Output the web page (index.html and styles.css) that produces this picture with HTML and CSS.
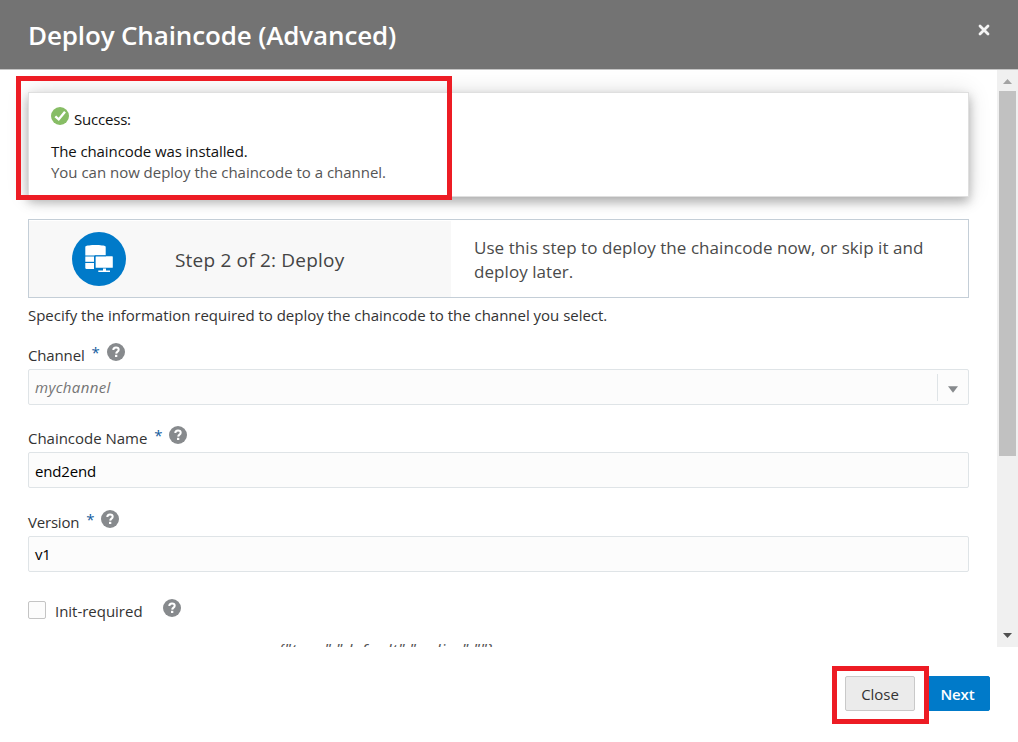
FILE: index.html
```html
<!DOCTYPE html>
<html lang="en">
<head>
<meta charset="utf-8">
<title>Deploy Chaincode (Advanced)</title>
<link rel="stylesheet" href="styles.css">
</head>
<body>
<svg class="defs" width="0" height="0">
  <symbol id="help" viewBox="0 0 18 18">
    <circle cx="9" cy="9" r="9" fill="#878a8d"/>
    <path d="M6.3 7C6.3 5.200 7.400 4.400 9 4.400s2.700.8 2.700 2.300c0 1.900-2.400 1.900-2.500 3.900" fill="none" stroke="#fff" stroke-width="2"/>
    <rect x="8" y="11.800" width="2.300" height="2.200" fill="#fff"/>
  </symbol>
</svg>
<div class="dialog">
  <header class="header">
    <h1 class="title">Deploy Chaincode (Advanced)</h1>
    <svg class="close-icon" viewBox="0 0 12 12"><path d="M2 2l8 8M10 2l-8 8" stroke="#f4f4f4" stroke-width="2.800" stroke-linecap="round"/></svg>
  </header>
  <div class="viewport">
    <main class="content">
      <section class="message">
        <div class="message-head">
          <svg class="check" viewBox="0 0 18 18"><circle cx="9" cy="9" r="9" fill="#87bd65"/><path d="M4.300 9.400l3.400 3L14 4.800" fill="none" stroke="#fff" stroke-width="2.400"/></svg>
          <span class="success">Success:</span>
        </div>
        <div class="message-line strong">The chaincode was installed.</div>
        <div class="message-line">You can now deploy the chaincode to a channel.</div>
        <div class="mark mark-message"></div>
      </section>
      <section class="step">
        <div class="step-name">
          <svg class="step-icon" viewBox="0 0 54 54">
            <circle cx="27" cy="27" r="27" fill="#007ac9"/>
            <g fill="#fff">
              <path d="M13.300 14.500c2-2 18.400-2 20.400 0v9h-20.400z"/>
              <rect x="13.300" y="24.500" width="8.700" height="5.300"/>
              <path d="M13.300 31h8.700v6h-7.500q-1.200 0-1.200-1.200z"/>
              <rect x="23.500" y="24.300" width="17.300" height="11.500" rx=".6"/>
              <path d="M31 36.500h3v2h4v1.500H26.300v-1.500H31z"/>
            </g>
            <path d="M22.800 37V23.800H34" fill="none" stroke="#007ac9"/>
          </svg>
          <span>Step 2 of 2: Deploy</span>
        </div>
        <div class="step-text">Use this step to deploy the chaincode now, or skip it and<br>deploy later.</div>
      </section>
      <p class="intro">Specify the information required to deploy the chaincode to the channel you select.</p>
      <div class="field">
        <div class="label"><span class="channel">Channel</span><span class="req">*</span><svg class="help"><use href="#help"/></svg></div>
        <div class="input select"><span class="placeholder">mychannel</span><span class="arrow"><svg width="11" height="7" viewBox="0 0 11 7"><path d="M0 0h11L5.500 7z" fill="#878a8d"/></svg></span></div>
      </div>
      <div class="field">
        <div class="label"><span>Chaincode Name</span><span class="req">*</span><svg class="help"><use href="#help"/></svg></div>
        <div class="input lowered">end2end</div>
      </div>
      <div class="field last">
        <div class="label"><span class="version">Version</span><span class="req">*</span><svg class="help"><use href="#help"/></svg></div>
        <div class="input">v1</div>
      </div>
      <div class="check-row"><span class="box"></span><span class="init">Init-required</span><svg class="help"><use href="#help"/></svg></div>
      <div class="policy">{"type":"default","policy":""}</div>
    </main>
    <div class="scrollbar">
      <div class="scroll-button"><svg width="9" height="5" viewBox="0 0 9 5"><path d="M0 5h9L4.500 0z" fill="#a3a3a3"/></svg></div>
      <div class="thumb"></div>
      <div class="scroll-button bottom"><svg width="9" height="5" viewBox="0 0 9 5"><path d="M0 0h9L4.500 5z" fill="#505050"/></svg></div>
    </div>
  </div>
  <footer class="footer">
    <div class="button">Close<div class="mark mark-close"></div></div>
    <div class="button primary">Next</div>
  </footer>
</div>
</body>
</html>
```
FILE: styles.css
```css
* { box-sizing: border-box; }
body { margin: 0; background: #fff; font: 15px/20px "Open Sans", "Noto Sans", sans-serif; letter-spacing: -.02px; color: #333; }
.defs { display: block; height: 0; }
.dialog { display: flex; flex-direction: column; width: 1018px; height: 742px; overflow: hidden; }
span { white-space: nowrap; }
.header { display: flex; justify-content: space-between; align-items: flex-start; flex: none; height: 70px; padding: 18px 28px 0; background: #737373; border-bottom: 1px solid #c4c4c4; }
.title { margin: 0; color: #fff; font-size: 26px; line-height: 34px; font-weight: 600; letter-spacing: -.14px; }
.close-icon { width: 12px; height: 12px; margin: 6px 0 0; }
.viewport { display: flex; flex: none; height: 577px; overflow: hidden; }
.content { flex: 1; padding: 22px 28px 0; min-width: 0; }
.message { position: relative; height: 105px; padding: 14px 22px 0; border: 1px solid #dfdfdf; background: #fff; box-shadow: 0 5px 10px rgba(0,0,0,.28), 0 0 22px rgba(0,0,0,.12); }
.message-head { display: flex; gap: 5px; height: 34px; color: #111; }
.check { width: 18px; height: 18px; flex: none; }
.success { padding-top: 2px; letter-spacing: -.2px; }
.message-line { line-height: 21px; color: #555; }
.message-line.strong { color: #111; letter-spacing: -.09px; }
.mark { position: absolute; border: 5px solid #ed1c24; pointer-events: none; }
.mark-message { left: -13px; top: -17px; width: 436px; height: 124px; }
.step { display: flex; height: 79px; margin-top: 22px; border: 1px solid #c4ced7; background: #fff; }
.step-name { display: flex; align-items: center; width: 422px; margin-top: 1px; padding-left: 43px; gap: 49px; background: #f8f8f8; font-size: 19px; letter-spacing: .2px; color: #444; }
.step-name span { padding-top: 2px; }
.step-icon { width: 54px; height: 54px; flex: none; }
.step-text { padding: 16px 0 0 23px; font-size: 17px; letter-spacing: .06px; line-height: 24px; color: #4a4a4a; white-space: nowrap; }
.intro { margin: 7px 0 19px; line-height: 20px; }
.field { height: 83px; }
.field.last { height: 89px; margin-top: 1px; }
.label { display: flex; height: 25px; padding-top: 1px; }
.channel { letter-spacing: -.15px; }
.version { letter-spacing: -.2px; }
.req { margin: -3px 0 0 7px; color: #145c9e; font-size: 15px; width: 7px; }
.help { width: 18px; height: 18px; margin: -2px 0 0 8px; flex: none; }
.input { display: flex; align-items: center; height: 36px; padding-left: 6px; border: 1px solid #dfe4e7; border-radius: 2px; background: #fcfcfc; color: #000; letter-spacing: -.15px; }
.lowered { padding-top: 2px; }
.select { justify-content: space-between; }
.placeholder { font-style: italic; color: #757575; letter-spacing: .35px; }
.arrow { display: flex; align-items: center; height: 27px; padding: 4px 10px 0; width: 31px; border-left: 1px solid #dfe4e7; }
.check-row { display: flex; height: 35px; }
.box { width: 18px; height: 18px; margin: 1px 9px 0 0; border: 1px solid #c4c4c4; border-radius: 2px; background: #fcfcfc; }
.init { padding-top: 1px; }
.check-row .help { margin: -1px 0 0 20px; }
.policy { padding-left: 250px; font-size: 17px; line-height: 30px; letter-spacing: .35px; font-style: italic; white-space: nowrap; color: #555; }
.scrollbar { display: flex; flex-direction: column; width: 21px; background: #f0f0f0; }
.scroll-button { display: flex; justify-content: center; height: 21px; padding-top: 9px; }
.thumb { height: 365px; margin: 0 2px; background: #c1c1c1; }
.bottom { margin-top: auto; padding-top: 7px; }
.footer { display: flex; justify-content: flex-end; gap: 11px; padding: 29px 28px 0; }
.button { position: relative; display: flex; align-items: center; justify-content: center; width: 70px; height: 35px; border: 1px solid #c9c9c9; border-radius: 2px; background: #ebebeb; color: #333; }
.primary { width: 64px; padding-right: 1px; background: #007ac9; border-color: #007ac9; color: #fff; font-weight: 600; letter-spacing: -.1px; }
.mark-close { left: -14px; top: -11px; width: 97px; height: 58px; z-index: 1; }
```
